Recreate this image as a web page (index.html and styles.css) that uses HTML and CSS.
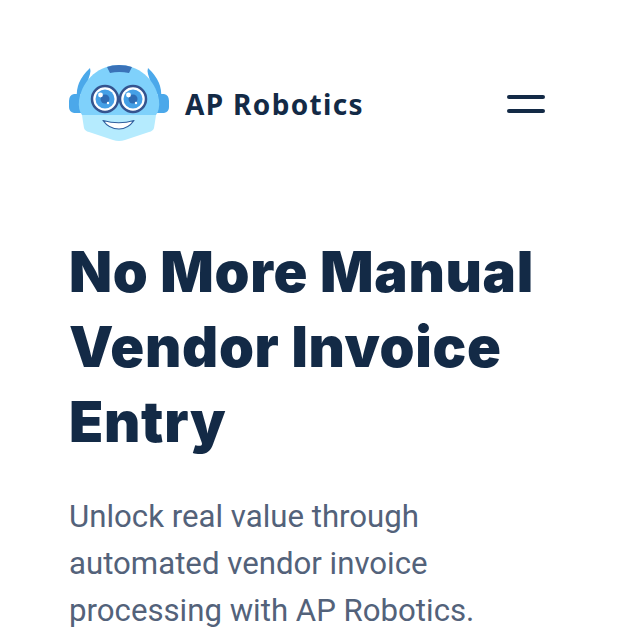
FILE: index.html
```html
<!DOCTYPE html>
<html lang="en">
<head>
<meta charset="utf-8">
<title>AP Robotics</title>
<link rel="stylesheet" href="styles.css">
</head>
<body>
<header class="nav">
  <a class="brand" href="#">
    <svg class="logo" viewBox="69 62 100 82" aria-hidden="true">
      <path d="M90 68 Q91 71 90 74 L85 90 L77 98 Q75 82 90 68Z" fill="#4ba8ea"/>
      <path d="M148 68 Q147 71 148 74 L153 90 L161 98 Q163 82 148 68Z" fill="#4ba8ea"/>
      <path d="M80 94 H74 Q69 95 69 101 V107 Q69 112 74 113 H82Z" fill="#4ba8ea"/>
      <path d="M158 94 H164 Q169 95 169 101 V107 Q169 112 164 113 H156Z" fill="#4ba8ea"/>
      <path d="M119 65 C138 65 155 78 159 100 Q160 110 156 115 H82 Q78 110 79 100 C83 78 100 65 119 65Z" fill="#7fd1fb"/>
      <path d="M82 115 H156 Q155 122 154 128 Q153 131 149 132 L125 140 Q119 142 113 140 L89 132 Q85 131 84 128 Q83 122 82 115Z" fill="#b5ebfe"/>
      <path d="M107 67 Q112 65 119 65 Q126 65 132 67 L129 73 Q119 71 110 73Z" fill="#3a72b8"/>
      <circle cx="105" cy="99" r="13" fill="#fff" stroke="#34548f" stroke-width="2.5"/>
      <circle cx="133" cy="99" r="13" fill="#fff" stroke="#34548f" stroke-width="2.5"/>
      <circle cx="105" cy="99" r="9.5" fill="#45a0e6"/>
      <circle cx="133" cy="99" r="9.5" fill="#45a0e6"/>
      <circle cx="105" cy="99" r="4.5" fill="#2f6cb3"/>
      <circle cx="133" cy="99" r="4.5" fill="#2f6cb3"/>
      <circle cx="100.5" cy="95" r="2.4" fill="#fff"/>
      <circle cx="128.5" cy="95" r="2.4" fill="#fff"/>
      <circle cx="108" cy="103" r="1.2" fill="#fff"/>
      <circle cx="136" cy="103" r="1.2" fill="#fff"/>
      <path d="M103 120.5 Q119 125 134 120.5 Q128 129 119 129 Q109 129 103 120.5Z" fill="#fff" stroke="#2f5f9e" stroke-width="1.2" stroke-linejoin="round"/>
    </svg>
    <span class="brand-name">AP Robotics</span>
  </a>
  <button class="menu" type="button" aria-label="Menu"><span class="bar"></span><span class="bar"></span></button>
</header>
<main class="hero">
  <h1 class="title">No More Manual Vendor Invoice Entry</h1>
  <p class="lead">Unlock real value through automated vendor invoice processing with AP Robotics.</p>
</main>
</body>
</html>
```
FILE: styles.css
```css
html, body { margin: 0; padding: 0; background: #fff; height: 644px; overflow: hidden; }
body { padding: 62px 83px 0 69px; box-sizing: border-box; }
.nav { display: flex; align-items: center; justify-content: space-between; height: 82px; }
.brand { display: flex; align-items: center; gap: 16px; text-decoration: none; }
.logo { width: 100px; height: 82px; display: block; }
.brand-name { font: 700 28px/1 "Noto Sans", sans-serif; color: #132a46; letter-spacing: 1.35px; padding-top: 2px; }
.menu { display: flex; flex-direction: column; gap: 10.5px; width: 38px; padding: 2px 0 0; border: 0; background: none; }
.bar { display: block; height: 3.5px; width: 38px; border-radius: 2px; background: #132a46; }
.hero { margin-top: 91px; }
.title { margin: 0; font: 900 56px/75px "Inter", sans-serif; color: #132a46; letter-spacing: 0.7px; width: 500px; }
.lead { margin: 33px 0 0; font: 400 31.2px/47px "Roboto", sans-serif; color: #53627a; width: 470px; }
```
